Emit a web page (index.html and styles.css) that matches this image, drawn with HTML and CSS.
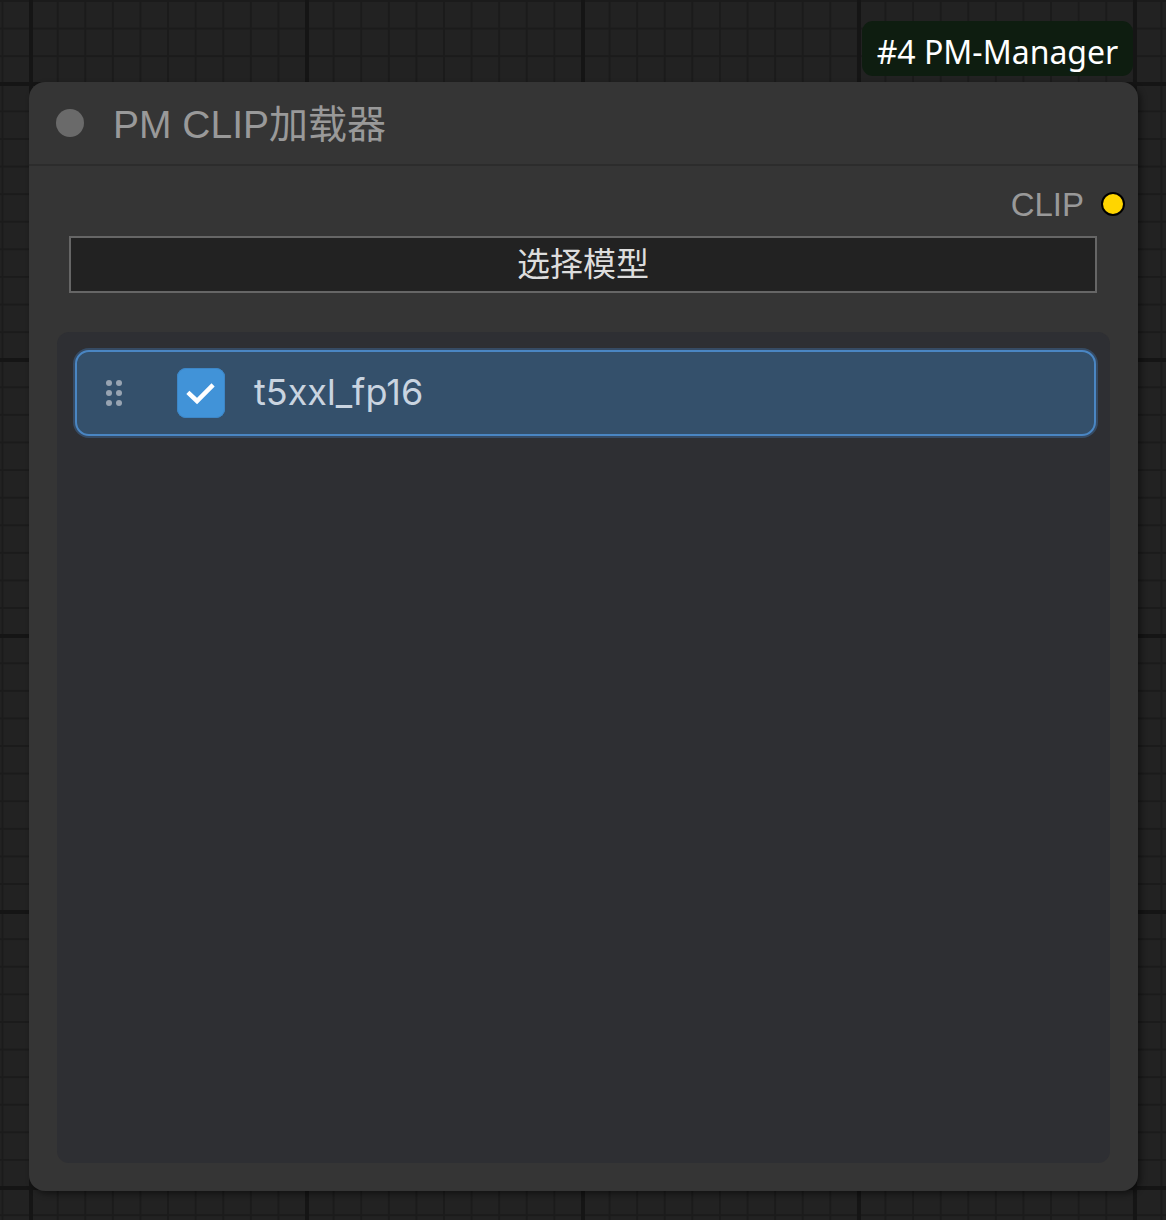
FILE: index.html
```html
<!DOCTYPE html>
<html lang="zh">
<head>
<meta charset="utf-8">
<title>PM CLIP加载器</title>
<link rel="stylesheet" href="styles.css">
</head>
<body>
<div class="canvas">
  <div class="badge">#4 PM-Manager</div>
  <div class="node">
    <div class="node-title">
      <span class="title-dot"></span>
      <span class="title-text">PM CLIP加载器</span>
    </div>
    <div class="node-body">
      <div class="output-row">
        <span class="output-label">CLIP</span>
        <span class="output-dot"></span>
      </div>
      <div class="select-btn">选择模型</div>
      <div class="model-list">
        <div class="model-item">
          <span class="drag-handle">
            <i></i><i></i><i></i><i></i><i></i><i></i>
          </span>
          <span class="checkbox">
            <svg viewBox="0 0 48 50" width="48" height="50" aria-hidden="true">
              <path d="M12.5 26 L20 33 L34.5 18.5" fill="none" stroke="#fff" stroke-width="4.5" stroke-linecap="square" stroke-linejoin="miter"/>
            </svg>
          </span>
          <span class="model-name">t5xxl_fp16</span>
        </div>
      </div>
    </div>
  </div>
</div>
</body>
</html>
```
FILE: styles.css
```css
html, body {
  margin: 0;
  padding: 0;
}
body {
  width: 1166px;
  height: 1220px;
  overflow: hidden;
  background-color: #222222;
  background-image:
    linear-gradient(to right, #151515 4px, transparent 4px),
    linear-gradient(to bottom, #151515 4px, transparent 4px),
    linear-gradient(to right, #1b1b1b 2px, transparent 2px),
    linear-gradient(to bottom, #1b1b1b 2px, transparent 2px);
  background-size: 276px 276px, 276px 276px, 27.6px 27.6px, 27.6px 27.6px;
  background-position: 29px 82px, 29px 82px, 1.5px 0, 1.5px 0;
  font-family: "Liberation Sans", Arial, "Noto Sans CJK SC", sans-serif;
}
.canvas {
  position: relative;
  width: 1166px;
  height: 1220px;
}
.badge {
  position: absolute;
  left: 862px;
  top: 21px;
  width: 271px;
  height: 55px;
  box-sizing: border-box;
  background: #0e1d10;
  border-radius: 11px;
  color: #ffffff;
  font-family: "Noto Sans", "Open Sans", sans-serif;
  font-size: 32px;
  line-height: 55px;
  padding-top: 3px;
  text-align: center;
  white-space: nowrap;
}
.node {
  position: absolute;
  left: 29px;
  top: 82px;
  width: 1109px;
  height: 1109px;
  background: #353535;
  border-radius: 16px;
  box-shadow: 3px 3px 6px rgba(0, 0, 0, 0.45);
  display: flex;
  flex-direction: column;
}
.node-title {
  height: 82px;
  border-bottom: 2px solid #2c2c2c;
  display: flex;
  align-items: center;
  padding-left: 27px;
  flex-shrink: 0;
}
.title-dot {
  width: 28px;
  height: 28px;
  border-radius: 50%;
  background: #6a6a6a;
  flex-shrink: 0;
}
.title-text {
  margin-left: 29px;
  font-size: 39px;
  color: #999999;
  font-family: "Liberation Sans", Arial, "Noto Sans CJK SC", sans-serif;
  line-height: 1;
  padding-top: 2px;
}
.node-body {
  flex: 1;
  display: flex;
  flex-direction: column;
  padding: 0 28px 28px 28px;
  min-height: 0;
}
.output-row {
  height: 70px;
  display: flex;
  align-items: center;
  justify-content: flex-end;
  margin-right: -15px;
  padding-top: 7px;
  box-sizing: border-box;
}
.output-label {
  font-size: 33px;
  color: #999999;
  line-height: 1;
  margin-right: 17px;
}
.output-dot {
  width: 20px;
  height: 20px;
  border-radius: 50%;
  background: #ffd500;
  border: 2px solid #000;
  margin-top: -2px;
}
.select-btn {
  margin: 0 13px 0 12px;
  height: 57px;
  box-sizing: border-box;
  border: 2px solid #666666;
  background: #222222;
  color: #dddddd;
  font-family: "Noto Sans CJK SC", sans-serif;
  font-size: 33px;
  line-height: 48px;
  text-align: center;
}
.model-list {
  margin-top: 39px;
  flex: 1;
  background: #2e2f33;
  border-radius: 12px;
  padding: 18px 14px 18px 18px;
}
.model-item {
  height: 86px;
  box-sizing: border-box;
  border: 2px solid #4a86c3;
  box-shadow: 0 0 0 2px rgba(64, 110, 160, 0.45);
  border-radius: 14px;
  background: #34506b;
  display: flex;
  align-items: center;
  padding-left: 29px;
}
.drag-handle {
  display: grid;
  grid-template-columns: 6px 6px;
  grid-auto-rows: 6px;
  column-gap: 4px;
  row-gap: 4px;
  width: 16px;
}
.drag-handle i {
  display: block;
  width: 6px;
  height: 6px;
  border-radius: 50%;
  background: #98a4b2;
}
.checkbox {
  margin-left: 55px;
  width: 48px;
  height: 50px;
  border-radius: 9px;
  background: #4193d8;
  box-shadow: inset 0 0 0 1px #3d86c6;
  display: flex;
}
.model-name {
  margin-left: 29px;
  font-family: Inter, "Noto Sans", sans-serif;
  font-size: 36px;
  color: #c9d4e0;
  line-height: 1;
  padding-bottom: 2px;
}
```
